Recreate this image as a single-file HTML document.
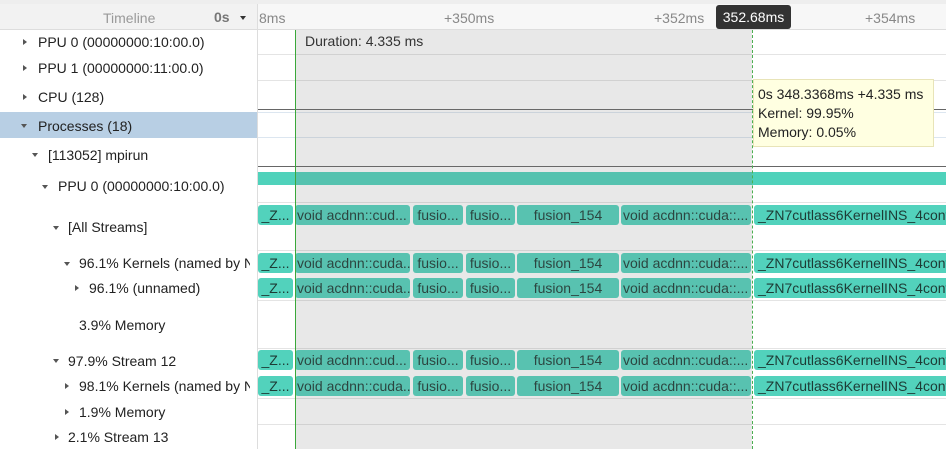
<!DOCTYPE html>
<html><head><style>
body{margin:0;width:946px;height:449px;overflow:hidden;background:#fff;font-family:"Liberation Sans",sans-serif;font-size:14px;color:#222;position:relative}
.a{position:absolute;white-space:nowrap}
.t{position:absolute;white-space:nowrap;line-height:16px}
.ar{position:absolute;width:0;height:0}
.r{border-left:4px solid #555;border-top:3.5px solid transparent;border-bottom:3.5px solid transparent}
.d{border-top:4px solid #555;border-left:3.5px solid transparent;border-right:3.5px solid transparent}
.b{position:absolute;height:20px;background:#52d2bc;border-radius:3px;overflow:hidden;color:#1d3b35;line-height:20px;font-size:14px;text-align:center;white-space:nowrap}
.l{text-align:left;padding-left:2px}
.hl{position:absolute;left:258px;right:0;height:1px;background:#e4e4e4}
</style></head><body>
<div class="a" style="left:0;top:0;width:946px;height:4px;background:#eee"></div>
<div class="a" style="left:0;top:4px;width:257px;height:25px;background:#f2f2f2;border-bottom:1px solid #ddd"></div>
<div class="a" style="left:258px;top:4px;width:688px;height:25px;background:#f7f7f7;border-bottom:1px solid #ddd"></div>
<div class="t" style="left:103px;top:10px;color:#999">Timeline</div>
<div class="t" style="left:214px;top:9px;color:#777;font-weight:bold">0s</div>
<div class="ar d" style="left:240px;top:16px;border-top-color:#333"></div>
<div class="t" style="left:259px;top:10px;color:#888">8ms</div>
<div class="t" style="left:444px;top:10px;color:#888">+350ms</div>
<div class="t" style="left:654px;top:10px;color:#888">+352ms</div>
<div class="t" style="left:865px;top:10px;color:#888">+354ms</div>
<div class="a" style="left:716px;top:5px;width:75px;height:24px;background:#333;border-radius:3px;color:#fff;line-height:24px;text-align:center">352.68ms</div>
<div class="a" style="left:257px;top:4px;width:1px;height:445px;background:#ddd"></div>
<div class="hl" style="top:54px"></div>
<div class="hl" style="top:80px"></div>
<div class="a" style="left:258px;right:0;top:109px;height:1px;background:#666"></div>
<div class="a" style="left:258px;right:0;top:112px;height:1px;background:#dce6f0"></div>
<div class="hl" style="top:137px;background:#dce6f0"></div>
<div class="a" style="left:258px;right:0;top:166px;height:1px;background:#666"></div>
<div class="hl" style="top:202px"></div>
<div class="hl" style="top:250px"></div>
<div class="hl" style="top:300px"></div>
<div class="hl" style="top:348px"></div>
<div class="hl" style="top:398px"></div>
<div class="hl" style="top:424px"></div>
<div class="a" style="left:0;top:112px;width:257px;height:26px;background:#b8cfe4"></div>
<div class="ar r" style="left:23px;top:39px"></div><div class="t" style="left:38px;top:34px">PPU 0 (00000000:10:00.0)</div>
<div class="ar r" style="left:23px;top:65px"></div><div class="t" style="left:38px;top:60px">PPU 1 (00000000:11:00.0)</div>
<div class="ar r" style="left:23px;top:94px"></div><div class="t" style="left:38px;top:89px">CPU (128)</div>
<div class="ar d" style="left:21px;top:124px"></div><div class="t" style="left:38px;top:118px">Processes (18)</div>
<div class="ar d" style="left:32px;top:153px"></div><div class="t" style="left:48px;top:147px">[113052] mpirun</div>
<div class="ar d" style="left:42px;top:185px"></div><div class="t" style="left:58px;top:178px">PPU 0 (00000000:10:00.0)</div>
<div class="ar d" style="left:53px;top:226px"></div><div class="t" style="left:68px;top:219px">[All Streams]</div>
<div class="ar d" style="left:64px;top:262px"></div><div class="t" style="left:79px;top:255px;width:171px;overflow:hidden">96.1% Kernels (named by NVTX)</div>
<div class="ar r" style="left:75px;top:285px"></div><div class="t" style="left:89px;top:280px">96.1% (unnamed)</div>
<div class="t" style="left:79px;top:317px">3.9% Memory</div>
<div class="ar d" style="left:53px;top:359px"></div><div class="t" style="left:68px;top:353px">97.9% Stream 12</div>
<div class="ar r" style="left:65px;top:383px"></div><div class="t" style="left:79px;top:378px;width:171px;overflow:hidden">98.1% Kernels (named by NVTX)</div>
<div class="ar r" style="left:65px;top:409px"></div><div class="t" style="left:79px;top:404px">1.9% Memory</div>
<div class="ar r" style="left:55px;top:434px"></div><div class="t" style="left:68px;top:429px">2.1% Stream 13</div>
<div class="a" style="left:258px;right:0;top:172px;height:13px;background:#4fd2bb"></div>
<div class="b" style="left:258px;top:205px;width:35px">_Z...</div><div class="b l" style="left:295px;top:205px;width:113px">void acdnn::cud...</div><div class="b" style="left:413px;top:205px;width:50px">fusio...</div><div class="b" style="left:466px;top:205px;width:49px">fusio...</div><div class="b" style="left:517px;top:205px;width:102px">fusion_154</div><div class="b l" style="left:621px;top:205px;width:128px">void acdnn::cuda::...</div><div class="b l" style="left:754px;top:205px;width:200px;padding-left:4px">_ZN7cutlass6KernelINS_4conv</div>
<div class="b" style="left:258px;top:253px;width:35px">_Z...</div><div class="b l" style="left:295px;top:253px;width:113px">void acdnn::cuda...</div><div class="b" style="left:413px;top:253px;width:50px">fusio...</div><div class="b" style="left:466px;top:253px;width:49px">fusio...</div><div class="b" style="left:517px;top:253px;width:102px">fusion_154</div><div class="b l" style="left:621px;top:253px;width:128px">void acdnn::cuda::...</div><div class="b l" style="left:754px;top:253px;width:200px;padding-left:4px">_ZN7cutlass6KernelINS_4conv</div>
<div class="b" style="left:258px;top:278px;width:35px">_Z...</div><div class="b l" style="left:295px;top:278px;width:113px">void acdnn::cuda...</div><div class="b" style="left:413px;top:278px;width:50px">fusio...</div><div class="b" style="left:466px;top:278px;width:49px">fusio...</div><div class="b" style="left:517px;top:278px;width:102px">fusion_154</div><div class="b l" style="left:621px;top:278px;width:128px">void acdnn::cuda::...</div><div class="b l" style="left:754px;top:278px;width:200px;padding-left:4px">_ZN7cutlass6KernelINS_4conv</div>
<div class="b" style="left:258px;top:350px;width:35px">_Z...</div><div class="b l" style="left:295px;top:350px;width:113px">void acdnn::cud...</div><div class="b" style="left:413px;top:350px;width:50px">fusio...</div><div class="b" style="left:466px;top:350px;width:49px">fusio...</div><div class="b" style="left:517px;top:350px;width:102px">fusion_154</div><div class="b l" style="left:621px;top:350px;width:128px">void acdnn::cuda::...</div><div class="b l" style="left:754px;top:350px;width:200px;padding-left:4px">_ZN7cutlass6KernelINS_4conv</div>
<div class="b" style="left:258px;top:376px;width:35px">_Z...</div><div class="b l" style="left:295px;top:376px;width:113px">void acdnn::cuda...</div><div class="b" style="left:413px;top:376px;width:50px">fusio...</div><div class="b" style="left:466px;top:376px;width:49px">fusio...</div><div class="b" style="left:517px;top:376px;width:102px">fusion_154</div><div class="b l" style="left:621px;top:376px;width:128px">void acdnn::cuda::...</div><div class="b l" style="left:754px;top:376px;width:200px;padding-left:4px">_ZN7cutlass6KernelINS_4conv</div>
<div class="a" style="left:296px;top:30px;width:456px;height:419px;background:rgba(120,120,120,0.17)"></div>
<div class="a" style="left:295px;top:30px;width:1px;height:419px;background:#3aa83a"></div>
<div class="a" style="left:752px;top:30px;width:0;height:419px;border-left:1px dashed #4caf50"></div>
<div class="t" style="left:305px;top:33px;color:#333">Duration: 4.335 ms</div>
<div class="a" style="left:753px;top:79px;width:179px;height:66px;background:#ffffe1;border:1px solid #e8e4b8"></div>
<div class="t" style="left:758px;top:86px">0s 348.3368ms +4.335 ms</div>
<div class="t" style="left:758px;top:105px">Kernel: 99.95%</div>
<div class="t" style="left:758px;top:124px">Memory: 0.05%</div>
</body></html>
